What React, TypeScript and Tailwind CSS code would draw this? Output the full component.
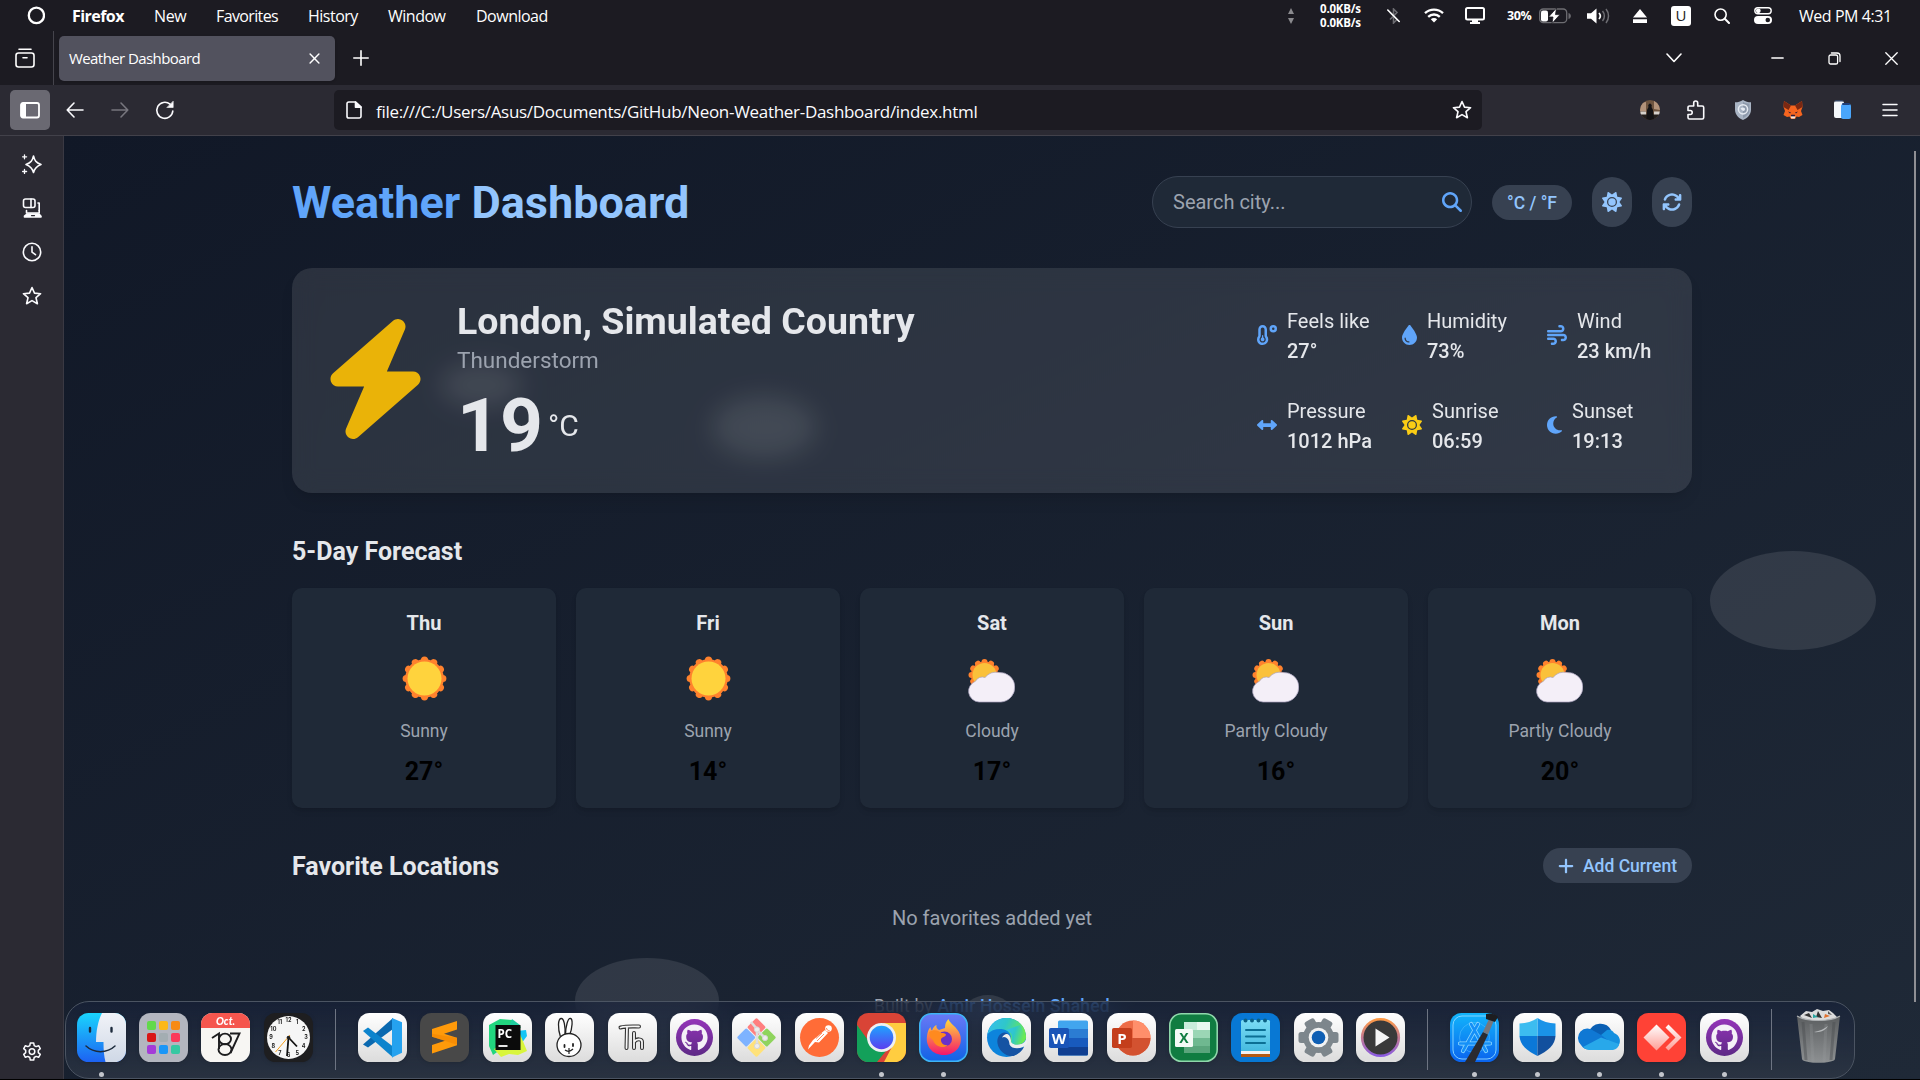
import React from "react";
import {
  FaArrowsRotate,
  FaBolt,
  FaDroplet,
  FaGithub,
  FaLeftRight,
  FaMagnifyingGlass,
  FaMoon,
  FaPlus,
  FaSun,
  FaTemperatureLow,
  FaWind,
} from "react-icons/fa6";

type Kids = { children?: React.ReactNode };

const line = {
  fill: "none",
  stroke: "currentColor",
  strokeWidth: 1.6,
  strokeLinecap: "round" as const,
  strokeLinejoin: "round" as const,
};

const starPath = "M10 1.5l2.5 5.6 6.1.6-4.6 4 1.4 6-5.4-3.1-5.4 3.1 1.4-6-4.6-4 6.1-.6z";

/* ---------- system menu bar ---------- */

function MenuBar() {
  return (
    <div className="flex h-[31px] items-center justify-between pr-[26px] text-[16px] leading-[31px] text-white">
      <div className="flex items-center">
        <svg className="ml-[27px] mr-[27px] h-[20px] w-[18px]" viewBox="0 0 18 20">
          <ellipse cx="9.4" cy="9.4" rx="7.6" ry="7.8" fill="none" stroke="#fff" strokeWidth="2.3" />
        </svg>
        <span className="w-[82px] pt-[2px] text-[16px] font-bold tracking-[-0.55px]">Firefox</span>
        <span className="w-[62px] pt-[2px] text-[16px] tracking-[-0.4px]">New</span>
        <span className="w-[92px] pt-[2px] text-[16px] tracking-[-0.62px]">Favorites</span>
        <span className="w-[80px] pt-[2px] text-[16px] tracking-[-0.5px]">History</span>
        <span className="w-[88px] pt-[2px] text-[16px] tracking-[-0.5px]">Window</span>
        <span className="pt-[2px] text-[16px] tracking-[-0.5px]">Download</span>
      </div>
      <div className="flex items-center whitespace-nowrap">
        <svg className="mr-[26px] h-[16px] w-[6px]" viewBox="0 0 6 16">
          <path d="M3 0l3 6H0zM3 16l3-6H0z" fill="#8a8a8e" />
        </svg>
        <div className="mr-6 flex w-[43px] flex-col text-[11.5px] font-bold leading-[14px] tracking-[-0.2px]">
          <span>0.0KB/s</span>
          <span>0.0KB/s</span>
        </div>
        <svg className="mr-6 h-[16px] w-[13px]" viewBox="0 0 13 16">
          <path d="M3 4.5l7 7-3.5 3.5V1L10 4.5l-7 7" fill="none" stroke="#6b6b70" strokeWidth="1.6" />
          <path d="M.8 2L12.2 13.5" stroke="#fff" strokeWidth="1.6" strokeLinecap="round" />
        </svg>
        <svg className="mr-[21px] h-[15px] w-5" viewBox="0 0 20 15">
          <g fill="none" stroke="#fff" strokeWidth="2.3">
            <path d="M1 5.2a13 13 0 0 1 18 0" />
            <path d="M4.2 8.8a8.4 8.4 0 0 1 11.6 0" />
          </g>
          <path d="M10 14.5l-3.2-3.3a4.6 4.6 0 0 1 6.4 0z" fill="#fff" />
        </svg>
        <svg className="mr-[22px] h-[17px] w-5" viewBox="0 0 20 17">
          <rect x="1" y="1" width="18" height="11.5" rx="1.5" fill="none" stroke="#fff" strokeWidth="2" />
          <path d="M7 13h6v2h2v2H5v-2h2z" fill="#fff" />
        </svg>
        <span className="mr-[6px] w-[26px] text-[12.5px] font-bold tracking-[-0.4px]">30%</span>
        <svg className="mr-4 h-4 w-8" viewBox="0 0 32 16">
          <rect x=".7" y="1" width="27" height="13.6" rx="3.6" fill="none" stroke="#6d6d72" strokeWidth="1.3" />
          <rect x="2" y="2.4" width="7" height="11" rx="2" fill="#fff" />
          <path d="M17.5 0L9.5 9h4.5l-1 6.5L21 6.6h-4.5z" fill="#fff" stroke="#1c1b22" strokeWidth=".8" />
          <path d="M30 5.5a3 3 0 0 1 0 5z" fill="#6d6d72" stroke="#6d6d72" />
        </svg>
        <svg className="mr-[22px] h-4 w-6" viewBox="0 0 24 16">
          <path d="M0 5.2h4L9.5.6v14.8L4 10.8H0z" fill="#fff" />
          <path d="M12 5a4.5 4.5 0 0 1 0 6" fill="none" stroke="#fff" strokeWidth="1.7" />
          <path d="M15.5 3a7.6 7.6 0 0 1 0 10M19 1a11 11 0 0 1 0 14" fill="none" stroke="#6d6d72" strokeWidth="1.5" />
        </svg>
        <svg className="mr-6 h-[14px] w-[14px]" viewBox="0 0 14 14">
          <path d="M7 0l7 8.6H0zM0 10.2h14V14H0z" fill="#fff" />
        </svg>
        <span className="mr-[23px] flex h-5 w-5 items-center justify-center rounded-[3px] bg-white text-[15px] leading-none text-[#1c1b22]">
          U
        </span>
        <svg className="mr-6 h-4 w-4" viewBox="0 0 16 16">
          <circle cx="6.6" cy="6.6" r="5.6" fill="none" stroke="#fff" strokeWidth="1.6" />
          <path d="M10.8 10.8L15 15" stroke="#fff" strokeWidth="2" strokeLinecap="round" />
        </svg>
        <svg className="mr-[27px] h-[17px] w-[18px]" viewBox="0 0 18 17">
          <rect x=".8" y=".8" width="16.4" height="6" rx="3" fill="none" stroke="#fff" strokeWidth="1.4" />
          <circle cx="4.3" cy="3.8" r="2.4" fill="#fff" />
          <rect x="0" y="9" width="18" height="8" rx="4" fill="#fff" />
          <circle cx="13.8" cy="13" r="2.3" fill="#1c1b22" />
        </svg>
        <span className="w-[95px] pt-[2px] text-[16px] tracking-[-0.45px]">Wed PM 4:31</span>
      </div>
    </div>
  );
}

/* ---------- browser chrome ---------- */

function TabBar() {
  return (
    <div className="flex h-[54px] items-center text-white">
      <div className="flex w-[53px] justify-center pr-[3px]">
        <svg className="h-5 w-5" viewBox="0 0 20 20" {...line}>
          <path d="M4 1.2h12" />
          <rect x="1" y="5" width="18" height="14" rx="2.5" />
          <path d="M8 9.8h4" />
        </svg>
      </div>
      <div className="h-full w-px bg-[#45444c]" />
      <div className="ml-[5px] flex h-[45px] w-[276px] items-center justify-between rounded-[5px] bg-[#52525e] pl-[10px] pr-[15px] shadow">
        <span className="pt-px text-[15px] tracking-[-0.58px]">Weather Dashboard</span>
        <svg className="h-[11px] w-[11px]" viewBox="0 0 12 12" {...line}>
          <path d="M1.2 1.2l9.6 9.6M10.8 1.2L1.2 10.8" />
        </svg>
      </div>
      <svg className="ml-[18px] h-4 w-4" viewBox="0 0 16 16" {...line}>
        <path d="M8 .8v14.4M.8 8h14.4" />
      </svg>
      <div className="ml-auto flex items-center pr-[22px]">
        <svg className="mr-[89px] h-4 w-4" viewBox="0 0 16 16" {...line}>
          <path d="M1 4l7 7.5L15 4" />
        </svg>
        <svg className="mr-11 h-[13px] w-[13px]" viewBox="0 0 13 13" {...line} strokeWidth={1.3}>
          <path d="M.8 6h11.4" />
        </svg>
        <svg className="mr-11 h-[13px] w-[13px]" viewBox="0 0 13 13" {...line} strokeWidth={1.3}>
          <rect x="1" y="3" width="8.6" height="9" rx="1.6" />
          <path d="M3.4 1H9a3 3 0 0 1 3 3v5.6" />
        </svg>
        <svg className="h-[13px] w-[13px]" viewBox="0 0 13 13" {...line} strokeWidth={1.3}>
          <path d="M.8.8l11.4 11.4M12.2.8L.8 12.2" />
        </svg>
      </div>
    </div>
  );
}

function ToolBar() {
  return (
    <div className="flex h-[51px] items-center border-b border-[#42414a] bg-[#2b2a33] pb-px pl-[10px] pr-[22px] text-[#fbfbfe]">
      <div className="flex h-10 w-10 items-center justify-center rounded-[5px] bg-[#6a6972]">
        <svg className="h-[18px] w-5" viewBox="0 0 20 18">
          <rect x="1" y="2" width="18" height="14.5" rx="2" fill="none" stroke="#fff" strokeWidth="1.8" />
          <path d="M1 3.5A1.5 1.5 0 0 1 2.5 2H6v14.5H2.5A1.5 1.5 0 0 1 1 15z" fill="#fff" />
        </svg>
      </div>
      <svg className="ml-4 h-[18px] w-[18px]" viewBox="0 0 18 18" {...line}>
        <path d="M17 9H1.2M8 2L1.2 9 8 16" />
      </svg>
      <svg className="ml-[27px] h-[18px] w-[18px] text-[#77767e]" viewBox="0 0 18 18" {...line}>
        <path d="M1 9h15.8M10 2l6.8 7-6.8 7" />
      </svg>
      <svg className="ml-[26px] h-5 w-5" viewBox="0 0 20 20" {...line}>
        <path d="M17.8 11A8 8 0 1 1 15 4.2" />
        <path d="M18.2 1.5v6h-6z" fill="currentColor" strokeWidth={0.6} />
      </svg>
      <div className="ml-[159px] flex h-10 w-[1148px] items-center rounded-[5px] bg-[#1c1b22] pl-3 pr-[10px]">
        <svg className="h-[18px] w-4" viewBox="0 0 16 18" {...line}>
          <path d="M2.8 1h6.7L15 6.2v9a1.8 1.8 0 0 1-1.8 1.8H2.8A1.8 1.8 0 0 1 1 15.2V2.8A1.8 1.8 0 0 1 2.8 1z" />
          <path d="M9.5 1v5.2H15z" fill="currentColor" />
        </svg>
        <span className="ml-[14px] pt-1 text-[17px] tracking-[-0.3px]">
          file:///C:/Users/Asus/Documents/GitHub/Neon-Weather-Dashboard/index.html
        </span>
        <svg className="ml-auto h-5 w-5" viewBox="0 0 20 20" {...line}>
          <path d={starPath} />
        </svg>
      </div>
      <div className="ml-auto flex items-center">
        <svg className="mr-[27px] h-5 w-5" viewBox="0 0 20 20">
          <clipPath id="avatar">
            <circle cx="10" cy="10" r="10" />
          </clipPath>
          <g clipPath="url(#avatar)">
            <path d="M0 0h20v20H0z" fill="#6e543f" />
            <path d="M0 3l6-1v9H0zM14 0h6v10l-6-1z" fill="#b3937a" />
            <path d="M0 11.5h6V15H0zM14 11.5h6V15h-6z" fill="#d5d0ca" />
            <path d="M0 14.5h20V20H0z" fill="#241f1c" />
            <path d="M6.5 20L7 10l1.5-3a1.8 2.2 0 1 1 3 0L13 10l1 10z" fill="#131214" />
          </g>
        </svg>
        <svg className="mr-[30px] h-5 w-[18px]" viewBox="0 0 18 20" {...line}>
          <path d="M1 10.500V7.500A1.500 1.500 0 0 1 2.500 6h4.200V3a2 2 0 0 1 4 0v3h4.500a1.500 1.500 0 0 1 1.500 1.500v10a1.500 1.500 0 0 1-1.500 1.500H2.500A1.500 1.500 0 0 1 1 17.500v-3h2.200a2 2 0 0 0 0-4z" />
        </svg>
        <svg className="mr-8 h-5 w-4" viewBox="0 0 16 20">
          <path d="M8 0c2.500 1.800 5 2.200 8 2.300v7.500C16 15 12 18.500 8 20 4 18.500 0 15 0 9.800V2.300C3 2.200 5.500 1.800 8 0z" fill="#a9b4c4" />
          <path d="M8 1.800c2.300 1.400 4.300 1.800 6.500 2v6c0 4-3 6.800-6.500 8.300z" fill="#8d99ab" />
          <circle cx="8" cy="9.3" r="4.6" fill="none" stroke="#e6ebf2" strokeWidth="1.5" />
          <path d="M5.500 8.500c2-2 5-1 4.500 1s-2.500 2-4.500-1z" fill="#e6ebf2" />
        </svg>
        <svg className="mr-[31px] h-[18px] w-5" viewBox="0 0 20 18">
          <path d="M1 0l7 4.500h4L19 0l.5 6-1.500 4 1.500 4-3.500 2-2.500-.5L12 18H8l-1.500-2.500L4 16 .5 14 2 10 .5 6z" fill="#f6651f" />
          <path d="M1 0l7 4.500-2.500 4.500L.5 6zM19 0l-7 4.500L14.500 9l5-3z" fill="#7a2812" />
          <path d="M7.500 15.200h5l-.8 2.300H8.300z" fill="#f3e9df" />
          <path d="M5 10.500l3 1-1 1zM15 10.500l-3 1 1 1zM8.300 13.800h3.400l.5 1.500H7.800z" fill="#2a1a3a" />
        </svg>
        <svg className="mr-[31px] h-[19px] w-[17px]" viewBox="0 0 17 19">
          <rect x="0" y="1" width="10" height="17" rx="2" fill="#f5f8fc" />
          <path d="M2 0h6a2 2 0 0 1 2 1.500H.2A2 2 0 0 1 2 0z" fill="#33435f" />
          <rect x="7" y="4" width="10" height="15" rx="2" fill="#4aa6fb" />
          <rect x="8" y="3" width="8" height="2" rx="1" fill="#1f3f78" />
        </svg>
        <svg className="h-4 w-4" viewBox="0 0 16 16" {...line} strokeWidth={1.5}>
          <path d="M1 2.5h14M1 8h14M1 13.5h14" />
        </svg>
      </div>
    </div>
  );
}

function SideBar() {
  return (
    <div className="flex w-16 shrink-0 flex-col items-center border-r border-[#3a3943] bg-[#2b2a33] pt-[18px] text-[#fbfbfe]">
      <svg className="h-5 w-5" viewBox="0 0 20 20" {...line}>
        <path d="M11.5 2c1 4.500 2.500 6.500 7.500 8.500-5 2-6.500 4-7.500 8-1-4-2.500-6-7.500-8 5-2 6.500-4 7.500-8.500z" />
        <path d="M2.500.8v4M.6 2.800h4M2.500 15.500v4M.6 17.500h4" strokeWidth={1.3} />
      </svg>
      <svg className="mt-6 h-5 w-5" viewBox="0 0 20 20" {...line}>
        <rect x="1.5" y="1" width="11.500" height="8.500" rx="2" />
        <path d="M9 1v8.500M16 5h1.200v7.500" />
        <path d="M4.500 12.500V15h12.700v-2.500" />
        <path d="M2.500 19v-.8L5 16h12l2 2.200v.8z" fill="currentColor" />
        <path d="M9.500 17.600h3" stroke="#2b2a33" strokeWidth={1.2} />
      </svg>
      <svg className="mt-6 h-5 w-5" viewBox="0 0 20 20" {...line}>
        <circle cx="10" cy="10" r="8.7" />
        <path d="M10 4.800v5.400l3.500 2.500" />
      </svg>
      <svg className="mt-6 h-5 w-5" viewBox="0 0 20 20" {...line}>
        <path d={starPath} />
      </svg>
      <svg className="mb-[17px] mt-auto h-5 w-5" viewBox="0 0 20 20" {...line} strokeWidth={1.5}>
        <path d="M8.300 1h3.400l.5 2.600 1.900 1 2.500-.9 1.700 2.900-2 1.800v2.200l2 1.800-1.700 2.900-2.500-.9-1.900 1.100-.5 2.500H8.300l-.5-2.500-1.900-1.100-2.500.9-1.700-2.900 2-1.800V8.400l-2-1.800 1.700-2.900 2.500.9 1.900-1z" />
        <circle cx="10" cy="9.6" r="2.8" />
      </svg>
    </div>
  );
}

/* ---------- weather page ---------- */

function Header() {
  return (
    <header className="flex h-[52px] items-center justify-between">
      <h1 className="text-[45px] font-bold leading-none text-[#60a5fa]">
        Weather <span className="text-[#93c5fd]">Dashboard</span>
      </h1>
      <div className="flex items-center gap-5">
        <div className="flex h-[52px] w-[320px] items-center justify-between rounded-full border border-[#374151] bg-[#1f2937] pl-5 pr-[9px] text-[20px] text-[#9ca3af]">
          <span>Search city...</span>
          <FaMagnifyingGlass className="h-5 w-5 text-[#60a5fa]" />
        </div>
        <button className="h-[35px] w-20 rounded-full bg-[#374151] pt-[2px] text-[17.5px] font-medium text-[#93c5fd]">°C / °F</button>
        <button className="flex h-[50px] w-10 items-center justify-center rounded-full bg-[#374151]">
          <FaSun className="h-5 w-5 text-[#93c5fd]" />
        </button>
        <button className="flex h-[50px] w-10 items-center justify-center rounded-full bg-[#374151]">
          <FaArrowsRotate className="h-5 w-5 text-[#93c5fd]" />
        </button>
      </div>
    </header>
  );
}

const stats = [
  { label: "Feels like", value: "27°", icon: <FaTemperatureLow className="h-5 w-5 text-[#60a5fa]" /> },
  { label: "Humidity", value: "73%", icon: <FaDroplet className="h-5 w-[15px] text-[#60a5fa]" /> },
  { label: "Wind", value: "23 km/h", icon: <FaWind className="h-5 w-5 text-[#60a5fa]" /> },
  { label: "Pressure", value: "1012 hPa", icon: <FaLeftRight className="h-5 w-5 text-[#60a5fa]" /> },
  { label: "Sunrise", value: "06:59", icon: <FaSun className="h-5 w-5 text-[#facc15]" /> },
  { label: "Sunset", value: "19:13", icon: <FaMoon className="h-5 w-[15px] text-[#60a5fa]" /> },
];

function CurrentWeather() {
  return (
    <section className="relative mt-10 flex h-[225px] items-center justify-between rounded-[20px] bg-white/10 p-[30px] text-[#e5e7eb] shadow-lg backdrop-blur-[12px]">
      <div className="flex items-center">
        <FaBolt className="mb-[3px] ml-px h-[120px] w-[105px] text-[#eab308]" />
        <div className="ml-[29px]">
          <h2 className="pt-px text-[37.5px] font-bold leading-[44px]">London, Simulated Country</h2>
          <p className="text-[22.5px] leading-[35px] text-[#9ca3af]">Thunderstorm</p>
          <div className="mt-[10px] flex items-center">
            <span className="text-[75px] font-bold leading-[75px]">19</span>
            <span className="ml-[5px] text-[30px] leading-[40px]">°C</span>
          </div>
        </div>
      </div>
      <div className="grid grid-cols-3 gap-[30px]">
        {stats.map((s) => (
          <div key={s.label} className="flex w-[115px] items-center gap-[10px] whitespace-nowrap text-[20px] leading-[30px]">
            <span className="shrink-0 pb-px">{s.icon}</span>
            <div>
              <p>{s.label}</p>
              <p className="font-medium">{s.value}</p>
            </div>
          </div>
        ))}
      </div>
    </section>
  );
}

const petals = [0, 30, 60, 90, 120, 150, 180, 210, 240, 270, 300, 330];

function SunIcon() {
  return (
    <svg className="h-[45px] w-[45px]" viewBox="0 0 45 45">
      <circle cx="22.5" cy="22.5" r="19.3" fill="#ff822d" />
      {petals.map((a) => (
        <circle key={a} cx="22.5" cy="4.2" r="3.6" fill="#ff822d" transform={`rotate(${a} 22.5 22.5)`} />
      ))}
      <circle cx="22.5" cy="22.5" r="17" fill="#ffd33d" />
    </svg>
  );
}

function CloudIcon() {
  return (
    <svg className="mr-[2px] mt-1 h-[48px] w-[48px]" viewBox="0 0 48 48">
      <circle cx="17.5" cy="18" r="13.6" fill="#ff822d" />
      {petals.map((a) => (
        <circle key={a} cx="17.5" cy="5" r="3" fill="#ff822d" transform={`rotate(${a} 17.5 18)`} />
      ))}
      <circle cx="17.5" cy="18" r="12" fill="#fac13a" />
      <path d="M12 45A11 10.800 0 0 1 8.500 24.200 7.600 7.600 0 0 1 18 20.500 14.500 14.500 0 0 1 32 15.500 14.700 14.700 0 0 1 34 45z" fill="#f4eff8" stroke="#a9a2bd" strokeWidth=".7" />
    </svg>
  );
}

const days = [
  { day: "Thu", text: "Sunny", temp: "27°", sunny: true },
  { day: "Fri", text: "Sunny", temp: "14°", sunny: true },
  { day: "Sat", text: "Cloudy", temp: "17°", sunny: false },
  { day: "Sun", text: "Partly Cloudy", temp: "16°", sunny: false },
  { day: "Mon", text: "Partly Cloudy", temp: "20°", sunny: false },
];

function Forecast() {
  return (
    <section className="mt-10">
      <h2 className="mb-[19px] pt-[2px] text-[25px] font-bold leading-[34px] text-[#e5e7eb]">5-Day Forecast</h2>
      <div className="grid grid-cols-5 gap-5">
        {days.map((d) => (
          <div key={d.day} className="flex h-[220px] flex-col items-center rounded-[10px] bg-[#1f2937] px-5 pt-5 shadow-md">
            <p className="text-[20px] font-bold leading-[30px] text-[#e5e7eb]">{d.day}</p>
            <div className="my-[10px] flex h-[61px] shrink-0 items-center">{d.sunny ? <SunIcon /> : <CloudIcon />}</div>
            <p className="text-[17.5px] leading-[25px] text-[#9ca3af]">{d.text}</p>
            <p className="mt-[10px] text-[25px] font-bold leading-[35px] text-black">{d.temp}</p>
          </div>
        ))}
      </div>
    </section>
  );
}

function Favorites() {
  return (
    <section className="mt-10">
      <div className="flex h-[35px] items-center justify-between">
        <h2 className="pt-[2px] text-[25px] font-bold text-[#e5e7eb]">Favorite Locations</h2>
        <button className="flex h-[35px] w-[149px] items-center justify-center gap-[9px] rounded-full bg-[#374151] text-[17.5px] font-medium text-[#93c5fd]">
          <FaPlus className="h-[18px] w-[16px]" />
          <span className="pt-px">Add Current</span>
        </button>
      </div>
      <p className="mt-5 text-center text-[20px] leading-[30px] text-[#9ca3af]">No favorites added yet</p>
      <p className="mt-[61px] text-center text-[17.5px] leading-[25px] tracking-[0.2px] text-[#9ca3af]">
        Built by <span className="font-medium text-[#60a5fa]">Amir Hossein Shahed</span>
      </p>
    </section>
  );
}

function WeatherPage() {
  return (
    <main className="relative flex-1 overflow-hidden bg-gradient-to-br from-[#111827] to-[#1f2937] font-[Roboto,sans-serif]">
      <div className="absolute left-[1646px] top-[415px] h-[99px] w-[166px] rounded-[50%] bg-white/10" />
      <div className="absolute left-[511px] top-[822px] h-[86px] w-[144px] rounded-[50%] bg-white/10" />
      <div className="absolute left-[899px] top-[859px] h-[38px] w-[50px] rounded-[50%] bg-white/10" />
      <div className="absolute left-[376px] top-[227px] h-[44px] w-[82px] rounded-[50%] bg-white/10" />
      <div className="absolute left-[648px] top-[260px] h-[62px] w-[104px] rounded-[50%] bg-white/10" />
      <div className="relative mx-auto w-[1400px] pt-10">
        <Header />
        <CurrentWeather />
        <Forecast />
        <Favorites />
      </div>
      <div className="absolute right-[4px] top-[15px] h-[851px] w-[2px] bg-[#8f8f94]" />
    </main>
  );
}

/* ---------- dock ---------- */

function Tile({ children }: Kids) {
  return (
    <svg className="h-[49px] w-[49px] overflow-visible drop-shadow" viewBox="0 0 49 49">
      {children}
    </svg>
  );
}

function Plate({ fill = "url(#plate)", stroke }: { fill?: string; stroke?: string }) {
  const inset = stroke ? 0.8 : 0;
  return (
    <rect x={inset} y={inset} width={49 - inset * 2} height={49 - inset * 2} rx="11.5" fill={fill} stroke={stroke} strokeWidth={1.6} />
  );
}

function Gradients() {
  const list: [string, string, string][] = [
    ["plate", "#ffffff", "#dcdcdc"],
    ["finder", "#1ad5fd", "#1d62f2"],
    ["paper", "#f1f3f8", "#cfd8e6"],
    ["git", "#9434b8", "#5d2a86"],
    ["chromeblue", "#1ea4ff", "#5b3df0"],
    ["ff", "#6a78f5", "#1163e6"],
    ["flame", "#ffdd3a", "#f5156c"],
    ["xcode", "#12b5fb", "#0a63ee"],
    ["note", "#7bdcf5", "#3bb4dc"],
    ["ring", "#ff9a45", "#8a5be0"],
    ["dia", "#ffffff", "#ff9d95"],
    ["can", "#5b5e60", "#8d9092"],
  ];
  return (
    <svg className="absolute h-0 w-0">
      <defs>
        {list.map(([id, a, b]) => (
          <linearGradient key={id} id={id} x1="0" y1="0" x2="0" y2="1">
            <stop offset="0" stopColor={a} />
            <stop offset="1" stopColor={b} />
          </linearGradient>
        ))}
        <linearGradient id="edgegreen" x1="0" y1="0" x2="1" y2="0.3">
          <stop offset="0" stopColor="#35bdf2" />
          <stop offset=".5" stopColor="#2fc7c9" />
          <stop offset="1" stopColor="#6bea52" />
        </linearGradient>
      </defs>
    </svg>
  );
}

const Finder = () => (
  <Tile>
    <Plate fill="url(#finder)" />
    <path d="M25 0h12.500A11.500 11.500 0 0 1 49 11.500v26A11.500 11.500 0 0 1 37.500 49H28.500c-1.500-6-2-12-2-20h-7.500C19 18 21 8 25 0z" fill="url(#paper)" />
    <path d="M13 15v3.500M34.500 15v3.500" stroke="#1d2b3d" strokeWidth="2.4" strokeLinecap="round" />
    <path d="M9 33c8 7.500 21 7.500 29 0" fill="none" stroke="#1d2b3d" strokeWidth="1.5" strokeLinecap="round" />
  </Tile>
);

const padColors = ["#62d94b", "#fcb817", "#f78a14", "#d91616", "#a3adb2", "#fb3a5a", "#a43bd8", "#1a96f7", "#36c8a2"];

const Launchpad = () => (
  <Tile>
    <Plate fill="#b3b6bf" />
    {padColors.map((c, i) => (
      <rect key={c} x={8 + (i % 3) * 12} y={8 + Math.floor(i / 3) * 12} width="9" height="9" rx="2" fill={c} />
    ))}
  </Tile>
);

const Calendar = () => (
  <Tile>
    <Plate fill="#f7f6f3" />
    <path d="M0 15v-3.500A11.500 11.500 0 0 1 11.500 0h26A11.500 11.500 0 0 1 49 11.500V15z" fill="#f5564e" />
    <text x="24.5" y="11.5" textAnchor="middle" fontSize="10.5" fontWeight="900" fontStyle="italic" fill="#fff" fontFamily="Lato, sans-serif">Oct.</text>
    <path d="M11 25l7-4.500V36M29 20.500h9.500L29.500 40" fill="none" stroke="#1d1d1f" strokeWidth="1.9" />
    <ellipse cx="24" cy="26" rx="6" ry="5.4" fill="none" stroke="#1d1d1f" strokeWidth="1.9" />
    <ellipse cx="24" cy="36.5" rx="6.5" ry="5.5" fill="none" stroke="#1d1d1f" strokeWidth="1.9" />
  </Tile>
);

const hours = [1, 2, 3, 4, 5, 6, 7, 8, 9, 10, 11, 12];

const Clock = () => (
  <Tile>
    <Plate fill="#1e1e20" />
    <circle cx="24.5" cy="24.5" r="21.5" fill="#f6f6f6" />
    {hours.map((h) => (
      <text
        key={h}
        x={24.5 + 17.5 * Math.sin((h * Math.PI) / 6)}
        y={26.4 - 17.5 * Math.cos((h * Math.PI) / 6)}
        textAnchor="middle"
        fontSize="5.5"
        fontWeight="700"
        fontFamily="Inter, sans-serif"
        fill="#222"
      >
        {h}
      </text>
    ))}
    <path d="M24.500 24.500L33 33.500" stroke="#111" strokeWidth="1.8" />
    <path d="M24.500 24.500L23 43" stroke="#111" strokeWidth="1.8" />
    <path d="M26 22L11.500 39" stroke="#f7a01c" strokeWidth="1" />
    <circle cx="24.5" cy="24.5" r="1.8" fill="#222" />
  </Tile>
);

const VsCode = () => (
  <Tile>
    <Plate />
    <path d="M35 5v11L10 34.500 5 31.500z" fill="#0a69b0" />
    <path d="M35 44.500V33.500L10 14.500l-5 3.500z" fill="#0d84cd" />
    <path d="M34 5l10 4.200v30.600L34 44.500z" fill="#25a2ef" />
  </Tile>
);

const Sublime = () => (
  <Tile>
    <Plate fill="#484848" />
    <path d="M12 16l25-8v8.500l-13 4.300 13 4v7.500L12 40.500V32l13-4.200-13-4z" fill="#ff9a0a" />
    <path d="M12 23.800v-3l25 4v7z" fill="#f08300" opacity=".55" />
  </Tile>
);

const PyCharm = () => (
  <Tile>
    <Plate />
    <path d="M6 12l11-6 12 1 9 7-14 18-14 10-4-9z" fill="#22d67f" />
    <path d="M29 6l8 6v10l-12-6z" fill="#1fcfa0" />
    <path d="M34 18l9-1 1 6-6 8z" fill="#13c5f5" />
    <path d="M37 21l7 17-9 4-9-1-8 3-7-8z" fill="#d9f53c" />
    <rect x="12.5" y="12" width="25" height="25" fill="#0b0b0b" />
    <text x="14.5" y="24.5" fontSize="11.5" fontWeight="700" fill="#fff" fontFamily="Open Sans, sans-serif">PC</text>
    <path d="M15.500 33h9" stroke="#fff" strokeWidth="1.8" />
  </Tile>
);

const Bunny = () => (
  <Tile>
    <Plate />
    <g fill="#fff" stroke="#222" strokeWidth="1.3">
      <path d="M15.500 24C12.500 15 13 6 16 5.500s4.500 8 4 16z" />
      <path d="M20.500 22c0-9 2.500-17 5-16.500s2 9-1 17z" />
      <ellipse cx="24" cy="32" rx="12" ry="11.5" />
    </g>
    <path d="M19.500 32v2M28 31v2" stroke="#222" strokeWidth="1.8" strokeLinecap="round" />
    <path d="M20 37q4 3 8-1M24 35v6" fill="none" stroke="#222" strokeWidth="1.2" />
  </Tile>
);

const Thonny = () => (
  <Tile>
    <Plate />
    <g fill="none" strokeLinecap="round" strokeLinejoin="round">
      <path d="M12.500 14.500c6-1.500 12-1 18.500-1M19 14l-.5 21M26 20v15M26 29c3-4 8-3 8 0v6" stroke="#333" strokeWidth="4" />
      <path d="M12.500 14.500c6-1.500 12-1 18.500-1M19 14l-.5 21M26 20v15M26 29c3-4 8-3 8 0v6" stroke="#f7f7f7" strokeWidth="1.8" />
    </g>
  </Tile>
);

const GitHubDesktop = () => (
  <Tile>
    <Plate />
    <circle cx="24.5" cy="24.5" r="18.5" fill="url(#git)" />
    <g transform="translate(11 11)">
      <FaGithub size={27} color="#f4f0f7" />
    </g>
  </Tile>
);

const GitBash = () => (
  <Tile>
    <Plate />
    <g transform="translate(24.5 24.5) rotate(45)">
      <rect x="-14" y="-14" width="13.5" height="13.5" rx="1.5" fill="#ff7f7f" />
      <rect x=".5" y="-14" width="13.5" height="13.5" rx="1.5" fill="#8fd45d" />
      <rect x="-14" y=".5" width="13.5" height="13.5" rx="1.5" fill="#7eb3ff" />
      <rect x=".5" y=".5" width="13.5" height="13.5" rx="1.5" fill="#ffe27a" />
    </g>
    <path d="M19 9l6 7v16M25 17l8 8" fill="none" stroke="#dedede" strokeWidth="2.6" />
    <g fill="#ededed" stroke="#d6d6d6">
      <circle cx="25" cy="16.5" r="2.6" />
      <circle cx="33" cy="25" r="2.6" />
      <circle cx="25" cy="33" r="2.6" />
    </g>
  </Tile>
);

const Postman = () => (
  <Tile>
    <Plate />
    <circle cx="24.5" cy="24.5" r="19.5" fill="#ff6c37" />
    <circle cx="33.5" cy="15.5" r="3.3" fill="#fff" />
    <path d="M30 17l3 3-9 9.500-4-.5-7 7.500 1-4 4-5.500z" fill="#fff" />
    <path d="M21 25.500l6-5.500M22 28l7-7" stroke="#ff6c37" strokeWidth=".8" />
    <path d="M31.500 15a2.500 2.500 0 0 0 3 2.500" fill="none" stroke="#ff6c37" strokeWidth=".8" />
  </Tile>
);

const Chrome = () => (
  <Tile>
    <clipPath id="chromeclip">
      <rect width="49" height="49" rx="11.5" />
    </clipPath>
    <g clipPath="url(#chromeclip)">
      <path d="M0 0h49v49H0z" fill="#d94436" />
      <path d="M0 12l13 18 16 8-9 11H0z" fill="#13a05a" />
      <path d="M26 10h23v39H27l10-19z" fill="#ffcd40" />
    </g>
    <circle cx="24.5" cy="24.5" r="14.5" fill="#eef0f2" />
    <circle cx="24.5" cy="24.5" r="11.8" fill="url(#chromeblue)" />
  </Tile>
);

const FirefoxIcon = () => (
  <Tile>
    <Plate fill="url(#ff)" stroke="#3fb4f5" />
    <path d="M29.500 6c.5 4 9 8 11.500 15.500C44.500 32 37 42 25 42S6.500 33 8 23c.5-4 1.500-7 3.500-9 .2 2 .8 3 1.500 3.500 1-3 2.500-4.500 4.500-5.500-.5 2 .5 4 2.500 5l6-2c0-4 1-6.500 3.500-9z" fill="url(#flame)" />
    <circle cx="25.5" cy="26" r="7.5" fill="#6a31c9" />
    <path d="M10 19c5-3 9-2 12 1 3 0 5 .5 5 2-1 2-4 2-5 4-.5 4 3 7 7 6-4 4-13 2-15-5-2-1-4-4-4-8z" fill="#ff8a1f" />
  </Tile>
);

const Edge = () => (
  <Tile>
    <Plate />
    <circle cx="24.5" cy="24.5" r="19.5" fill="#0d84dc" />
    <path d="M5.500 21C8 10 15 5 24.500 5 36 5 44 14 44 23.500c0 5-4 8-9 8-4.500 0-7-2-6.500-4 1.500-6-2-11-9-11.500-6-.3-11 1.500-14 5z" fill="url(#edgegreen)" />
    <path d="M28.500 27.500c0-4-2-8-6-8-4.500 0-8 5-7 11 1.500 8 9 13.500 16 12.500 4.500-1.500 8.500-5 10.500-9-7 3-13.500-1-13.500-6.500z" fill="#1553a3" />
    <path d="M27.500 31.500c2 4 8 5 13.500 2.500l4-3v-8c-.5 5-4 8.500-9.500 8.500-4.500 0-7-2-6.500-4-1-8-6-8-9-3 3-2 7.500 1 7.500 7z" fill="#eee" />
    <path d="M30 27c1-6-2-9-6-10L38 12l6 11c0 5-4 8.500-9 8.500-4 0-6.500-2-5-4.500z" fill="url(#edgegreen)" />
  </Tile>
);

const Word = () => (
  <Tile>
    <Plate />
    <rect x="14" y="7.5" width="30" height="35" rx="1.5" fill="#41a5ee" />
    <path d="M14 16h30v9H14z" fill="#2b7cd3" />
    <path d="M14 25h30v9H14z" fill="#185abd" />
    <path d="M14 34h30v7a1.500 1.500 0 0 1-1.500 1.500h-27A1.500 1.500 0 0 1 14 41z" fill="#103f91" />
    <rect x="5" y="15" width="20" height="20" rx="1.8" fill="#1a54b8" />
    <text x="15" y="30.5" textAnchor="middle" fontSize="15" fontWeight="700" fill="#fff" fontFamily="Open Sans, sans-serif">W</text>
  </Tile>
);

const PowerPoint = () => (
  <Tile>
    <Plate />
    <circle cx="26" cy="25" r="17.5" fill="#ed6c47" />
    <path d="M26 7.500A17.500 17.500 0 0 1 43.500 25H26z" fill="#ff8f6b" />
    <path d="M43.500 25a17.500 17.500 0 0 1-35 0z" fill="#d35230" />
    <rect x="5" y="15" width="20" height="20" rx="1.8" fill="#c43e1c" />
    <text x="15" y="30.5" textAnchor="middle" fontSize="15" fontWeight="700" fill="#fff" fontFamily="Open Sans, sans-serif">P</text>
  </Tile>
);

const Excel = () => (
  <Tile>
    <Plate fill="#107c41" stroke="#8fd8ab" />
    <path d="M15 9h26v31H15z" fill="#c9eddb" />
    <path d="M28 9h13v8H28z" fill="#e8f8ef" />
    <path d="M15 17h26v8H15z" fill="#9bd6b5" />
    <path d="M15 25h26v8H15z" fill="#6fb890" />
    <path d="M15 33h26v7H15z" fill="#5aa57c" />
    <rect x="6" y="16" width="18" height="18" rx="1.5" fill="#f4faf6" />
    <text x="15" y="30" textAnchor="middle" fontSize="14" fontWeight="700" fill="#107c41" fontFamily="Open Sans, sans-serif">X</text>
  </Tile>
);

const Notepad = () => (
  <Tile>
    <Plate fill="#0878d4" />
    <rect x="10" y="7" width="29" height="37" rx="1.5" fill="url(#note)" />
    <path d="M10 38h29v3H10z" fill="#f2f2f2" />
    <path d="M10 41h29v3H10z" fill="#b45a14" />
    <path d="M15 17h19M15 23.500h19M15 30h19" stroke="#0b6f94" strokeWidth="2" strokeLinecap="round" />
    {[14.5, 21, 27.5, 34].map((x) => (
      <circle key={x} cx={x} cy="7.5" r="2" fill="#0b6084" />
    ))}
  </Tile>
);

const Settings = () => (
  <Tile>
    <Plate />
    <g transform="translate(24.5 24.5)">
      {[0, 60, 120].map((a) => (
        <rect key={a} x="-5.5" y="-20" width="11" height="40" rx="2.5" fill="#7d868c" transform={`rotate(${a + 30})`} />
      ))}
      <circle r="15.5" fill="#7d868c" />
      <circle r="9.8" fill="#f2f2f2" />
      <circle r="6.8" fill="#0f5fb4" />
    </g>
  </Tile>
);

const Media = () => (
  <Tile>
    <Plate />
    <circle cx="24.5" cy="24.5" r="18.3" fill="#3a3a3a" stroke="url(#ring)" strokeWidth="2.6" />
    <path d="M19.500 15.500v18L33.500 24.500z" fill="#f6f6f6" />
  </Tile>
);

const Xcode = () => (
  <Tile>
    <Plate fill="url(#xcode)" />
    <rect x="3" y="3" width="43" height="43" rx="9" fill="none" stroke="#8fd8ff" strokeWidth=".9" />
    <circle cx="24.5" cy="24.5" r="15" fill="none" stroke="#5cc3ff" strokeWidth=".5" />
    <g fill="none" stroke="#8fd8ff" strokeWidth="4.2" strokeLinecap="round">
      <path d="M28 11L13 38M21 11l15 27M10 30.500h30" />
    </g>
    <g fill="none" stroke="#1590f8" strokeWidth="2.6" strokeLinecap="round">
      <path d="M28 11L13 38M21 11l15 27M10 30.500h30" />
    </g>
    <path d="M33 19l5 2.500L25 49H15z" fill="#2b2b30" />
    <path d="M39 6l4.500 2.500-5.500 13-5-2.500z" fill="#77777c" />
    <path d="M36 1c4-1.500 9 0 12 3l-3 5-9-3z" fill="#1d1d20" />
  </Tile>
);

const Defender = () => (
  <Tile>
    <Plate />
    <path d="M24.500 5c5 3.500 11 5 18 5.500V23H24.500z" fill="#1a93e8" />
    <path d="M24.500 5c-5 3.500-11 5-18 5.500V23h18z" fill="#3cbcf0" />
    <path d="M6.500 23h18v20C14 38 7 32 6.500 23z" fill="#0b78d8" />
    <path d="M42.500 23h-18v20c10.500-5 17.500-11 18-20z" fill="#12509e" />
  </Tile>
);

const OneDrive = () => (
  <Tile>
    <Plate />
    <path d="M14 19a12 12 0 0 1 22-2l-12 13z" fill="#0a5fb4" />
    <path d="M6 32a9.500 9.500 0 0 1 13-14l16 9-20 9.500A9.500 9.500 0 0 1 6 32z" fill="#0f78d4" />
    <path d="M26 22l6-5c3-1 6 .5 7 3a8.500 8.500 0 0 1 3.500 14z" fill="#1490df" />
    <path d="M8 34l18-9.500L44 31a6.500 6.500 0 0 1-6 6H14a10 10 0 0 1-6-3z" fill="#28a8ea" />
  </Tile>
);

const AnyDesk = () => (
  <Tile>
    <Plate fill="#ff4236" />
    <path d="M19.500 11.500l13 13-13 13-13-13z" fill="url(#dia)" />
    <path d="M28.500 14.500l3-3 13 13-13 13-3-3 10-10z" fill="url(#dia)" />
  </Tile>
);

const Trash = () => (
  <svg className="h-[57px] w-[45px]" viewBox="0 0 45 57">
    <path d="M4 8l6-5 6 1 5-3 6 2 6-1 4 3 5 5-8 5H10z" fill="#dcdcdc" />
    <path d="M8 7l5-2 3 5zM22 3l4 7-6-1z" fill="#333" />
    <path d="M17 6l5 3-5 1z" fill="#2aa6a0" />
    <path d="M29 6l5 2-6 2z" fill="#e2712c" />
    <path d="M32 3l4 4-4-1z" fill="#555" />
    <path d="M1 8c10 6 33 6 43 0l-5 43c-1 5-32 5-33 0z" fill="url(#can)" />
    <path d="M7 14l3 38M38 14l-3 38" stroke="#4a4d50" strokeWidth="3" opacity=".45" />
    <path d="M15 16l2 39M30 16l-2 39" stroke="#9a9d9f" strokeWidth="3" opacity=".25" />
    <path d="M18 24c6-1 10-3 14-6-2 4-8 7-14 6z" fill="#b5b8ba" />
    <path d="M1 8c10 6 33 6 43 0" fill="none" stroke="#aeb1b3" strokeWidth="1.2" />
  </svg>
);

function Cell({ children, dot }: Kids & { dot?: boolean }) {
  return (
    <div className="relative flex h-full w-[62.4px] shrink-0 justify-center pt-[11px]">
      {children}
      {dot && <span className="absolute bottom-[1px] h-[5px] w-[5px] rounded-full bg-[#c3c6cc]" />}
    </div>
  );
}

function Divider() {
  return (
    <div className="flex h-full w-[31.7px] shrink-0 justify-center pt-[7px]">
      <div className="h-[61px] w-px bg-[#6d7482]" />
    </div>
  );
}

function Dock() {
  return (
    <div className="absolute bottom-[1px] left-[65px] flex h-[78px] w-[1790px] rounded-[24px] border border-[#4b5462] bg-gradient-to-b from-[#17213a]/60 to-[#303947]/70 pl-[4px] backdrop-blur-[16px]">
      <Gradients />
      <Cell dot><Finder /></Cell>
      <Cell><Launchpad /></Cell>
      <Cell><Calendar /></Cell>
      <Cell><Clock /></Cell>
      <Divider />
      <Cell><VsCode /></Cell>
      <Cell><Sublime /></Cell>
      <Cell><PyCharm /></Cell>
      <Cell><Bunny /></Cell>
      <Cell><Thonny /></Cell>
      <Cell><GitHubDesktop /></Cell>
      <Cell><GitBash /></Cell>
      <Cell><Postman /></Cell>
      <Cell dot><Chrome /></Cell>
      <Cell dot><FirefoxIcon /></Cell>
      <Cell><Edge /></Cell>
      <Cell><Word /></Cell>
      <Cell><PowerPoint /></Cell>
      <Cell><Excel /></Cell>
      <Cell><Notepad /></Cell>
      <Cell><Settings /></Cell>
      <Cell><Media /></Cell>
      <Divider />
      <Cell dot><Xcode /></Cell>
      <Cell dot><Defender /></Cell>
      <Cell dot><OneDrive /></Cell>
      <Cell dot><AnyDesk /></Cell>
      <Cell dot><GitHubDesktop /></Cell>
      <Divider />
      <div className="flex w-[62.4px] shrink-0 justify-center pt-[6px]">
        <Trash />
      </div>
    </div>
  );
}

export default function App() {
  return (
    <div className="relative flex h-[1080px] w-[1920px] flex-col overflow-hidden bg-[#1c1b22] font-['Open_Sans','Noto_Sans',sans-serif]">
      <MenuBar />
      <TabBar />
      <ToolBar />
      <div className="flex min-h-0 flex-1 border-b border-black">
        <SideBar />
        <WeatherPage />
      </div>
      <Dock />
    </div>
  );
}
